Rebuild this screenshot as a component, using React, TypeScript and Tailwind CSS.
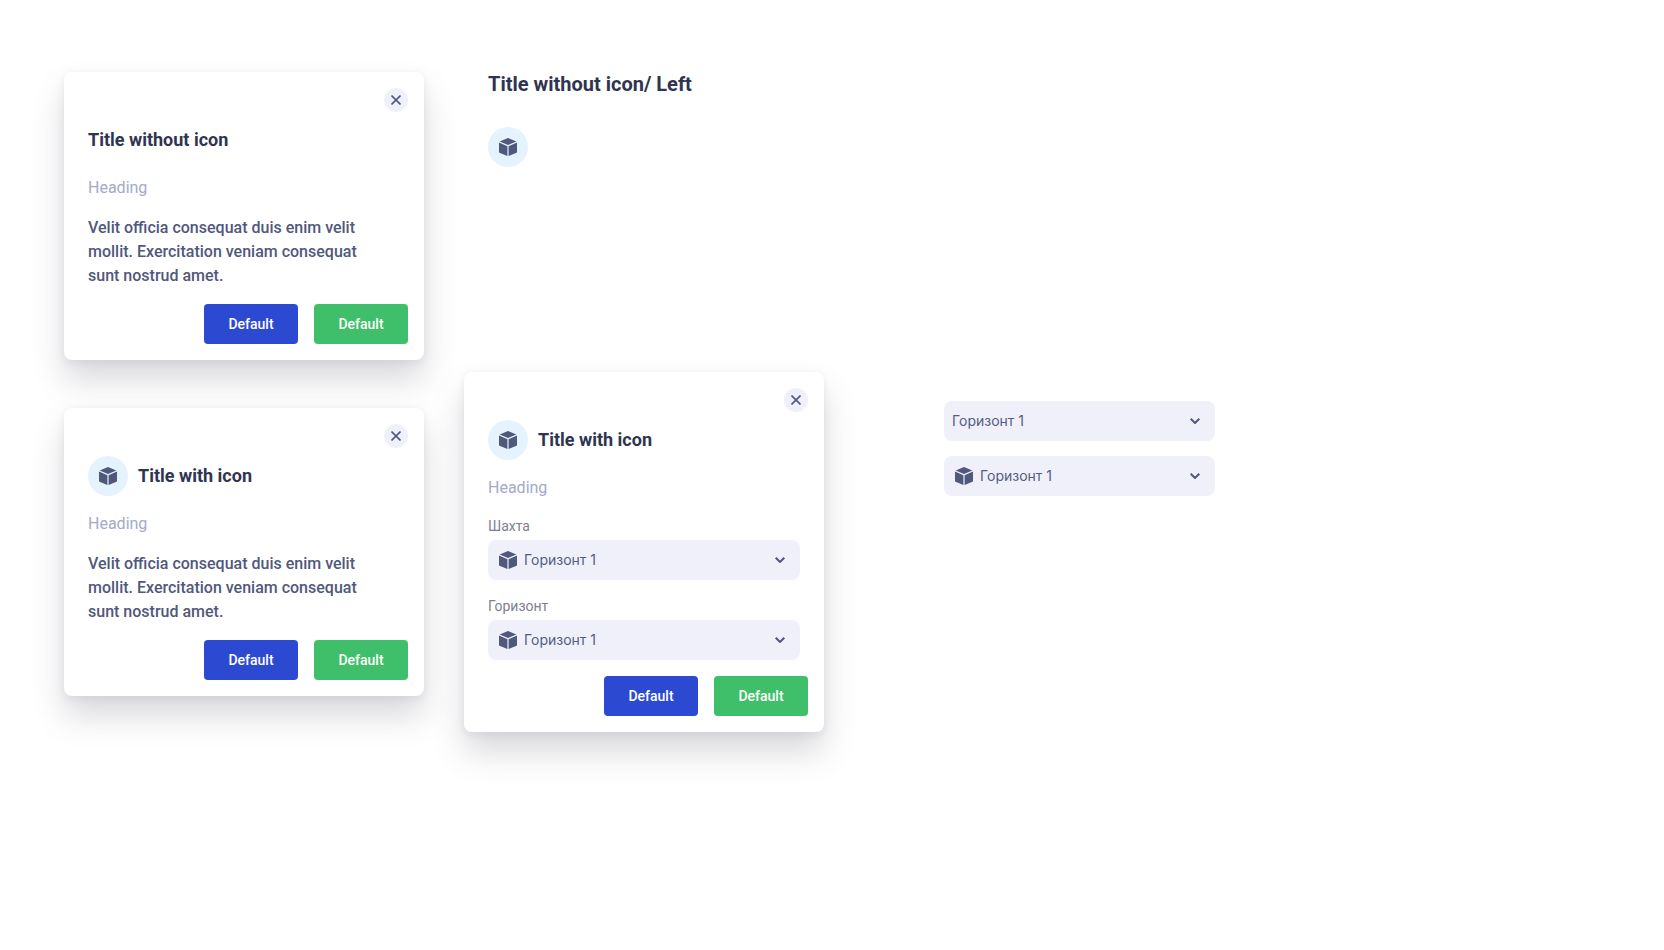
import { useId, type ReactNode } from "react";

function CubeIcon({ className = "" }: { className?: string }) {
  return (
    <svg viewBox="0 0 18 18" className={`size-[18px] fill-[#50587b] ${className}`} aria-hidden="true">
      <path d="M9 0 17.3 3.5 9 7 .7 3.5Z" />
      <path d="M0 4.6 8.4 8.2V18L.5 14.8Q0 14.6 0 14Z" />
      <path d="M18 4.6 9.6 8.2V18l7.9-3.2q.5-.2.5-.8Z" />
    </svg>
  );
}

function CubeBadge() {
  return (
    <span className="flex size-10 shrink-0 items-center justify-center rounded-full bg-[#e5f3ff]">
      <CubeIcon />
    </span>
  );
}

function CloseButton() {
  return (
    <button type="button" aria-label="Close" className="flex size-6 items-center justify-center self-end rounded-full bg-[#f0f0fb]">
      <svg viewBox="0 0 10 10" className="size-2.5 fill-none stroke-[#50587b]" strokeWidth="1.6" aria-hidden="true">
        <path d="M.5.5l9 9M9.5.5l-9 9" />
      </svg>
    </button>
  );
}

function SelectBox({ id, icon = false, label }: { id?: string; icon?: boolean; label?: string }) {
  return (
    <div className="relative flex h-10 items-center">
      <select
        id={id}
        aria-label={label}
        className={`size-full appearance-none rounded-lg bg-[#f0f0fb] pr-10 font-[Inter,sans-serif] text-sm text-[#555c7f] ${icon ? "pl-9" : "pl-2"}`}
      >
        <option>Горизонт 1</option>
      </select>
      {icon && <CubeIcon className="pointer-events-none absolute left-[11px]" />}
      <svg
        viewBox="0 0 10 6"
        className="pointer-events-none absolute right-[15px] h-1.5 w-2.5 fill-none stroke-[#50587b]"
        strokeWidth="2"
        aria-hidden="true"
      >
        <path d="M.7.7 5 5 9.3.7" />
      </svg>
    </div>
  );
}

function Field({ label }: { label: string }) {
  const id = useId();
  return (
    <div className="flex flex-col gap-1">
      <label htmlFor={id} className="text-sm leading-5 text-[#7d7f92]">
        {label}
      </label>
      <SelectBox id={id} icon />
    </div>
  );
}

function Card({ title, icon = false, children }: { title: string; icon?: boolean; children: ReactNode }) {
  return (
    <section className="flex w-[360px] flex-col rounded-lg bg-white p-4 shadow-[0_20px_32px_rgba(96,97,112,0.24),0_2px_8px_rgba(40,41,61,0.08)]">
      <CloseButton />
      <div className="mt-2 flex flex-col gap-4 px-2">
        <header className="flex h-10 items-center gap-2.5">
          {icon && <CubeBadge />}
          <h2 className="text-lg font-bold text-[#2f3550]">{title}</h2>
        </header>
        <p className="text-base text-[#a3a9c7]">Heading</p>
        {children}
      </div>
      <footer className="mt-4 flex justify-end gap-4">
        <button type="button" className="h-10 min-w-[94px] rounded bg-[#2c49d2] px-4 text-sm font-medium text-white">
          Default
        </button>
        <button type="button" className="h-10 min-w-[94px] rounded bg-[#40bf6a] px-4 text-sm font-medium text-white">
          Default
        </button>
      </footer>
    </section>
  );
}

function BodyText() {
  return (
    <p className="pr-5 text-base font-medium text-[#50587b]">
      Velit officia consequat duis enim velit mollit. Exercitation veniam consequat sunt nostrud amet.
    </p>
  );
}

export default function App() {
  return (
    <main className="flex min-h-screen items-start gap-10 bg-white px-16 py-[72px] font-[Roboto,sans-serif]">
      <div className="flex flex-col gap-12">
        <Card title="Title without icon">
          <BodyText />
        </Card>
        <Card title="Title with icon" icon>
          <BodyText />
        </Card>
      </div>
      <div className="flex flex-col">
        <div className="flex flex-col gap-[31px] px-6">
          <h1 className="text-xl leading-6 font-bold text-[#2f3550]">Title without icon/ Left</h1>
          <CubeBadge />
        </div>
        <div className="mt-[205px]">
          <Card title="Title with icon" icon>
            <Field label="Шахта" />
            <Field label="Горизонт" />
          </Card>
        </div>
      </div>
      <div className="mt-[329px] ml-20 flex w-[271px] flex-col gap-[15px]">
        <SelectBox label="Горизонт" />
        <SelectBox label="Горизонт" icon />
      </div>
    </main>
  );
}
